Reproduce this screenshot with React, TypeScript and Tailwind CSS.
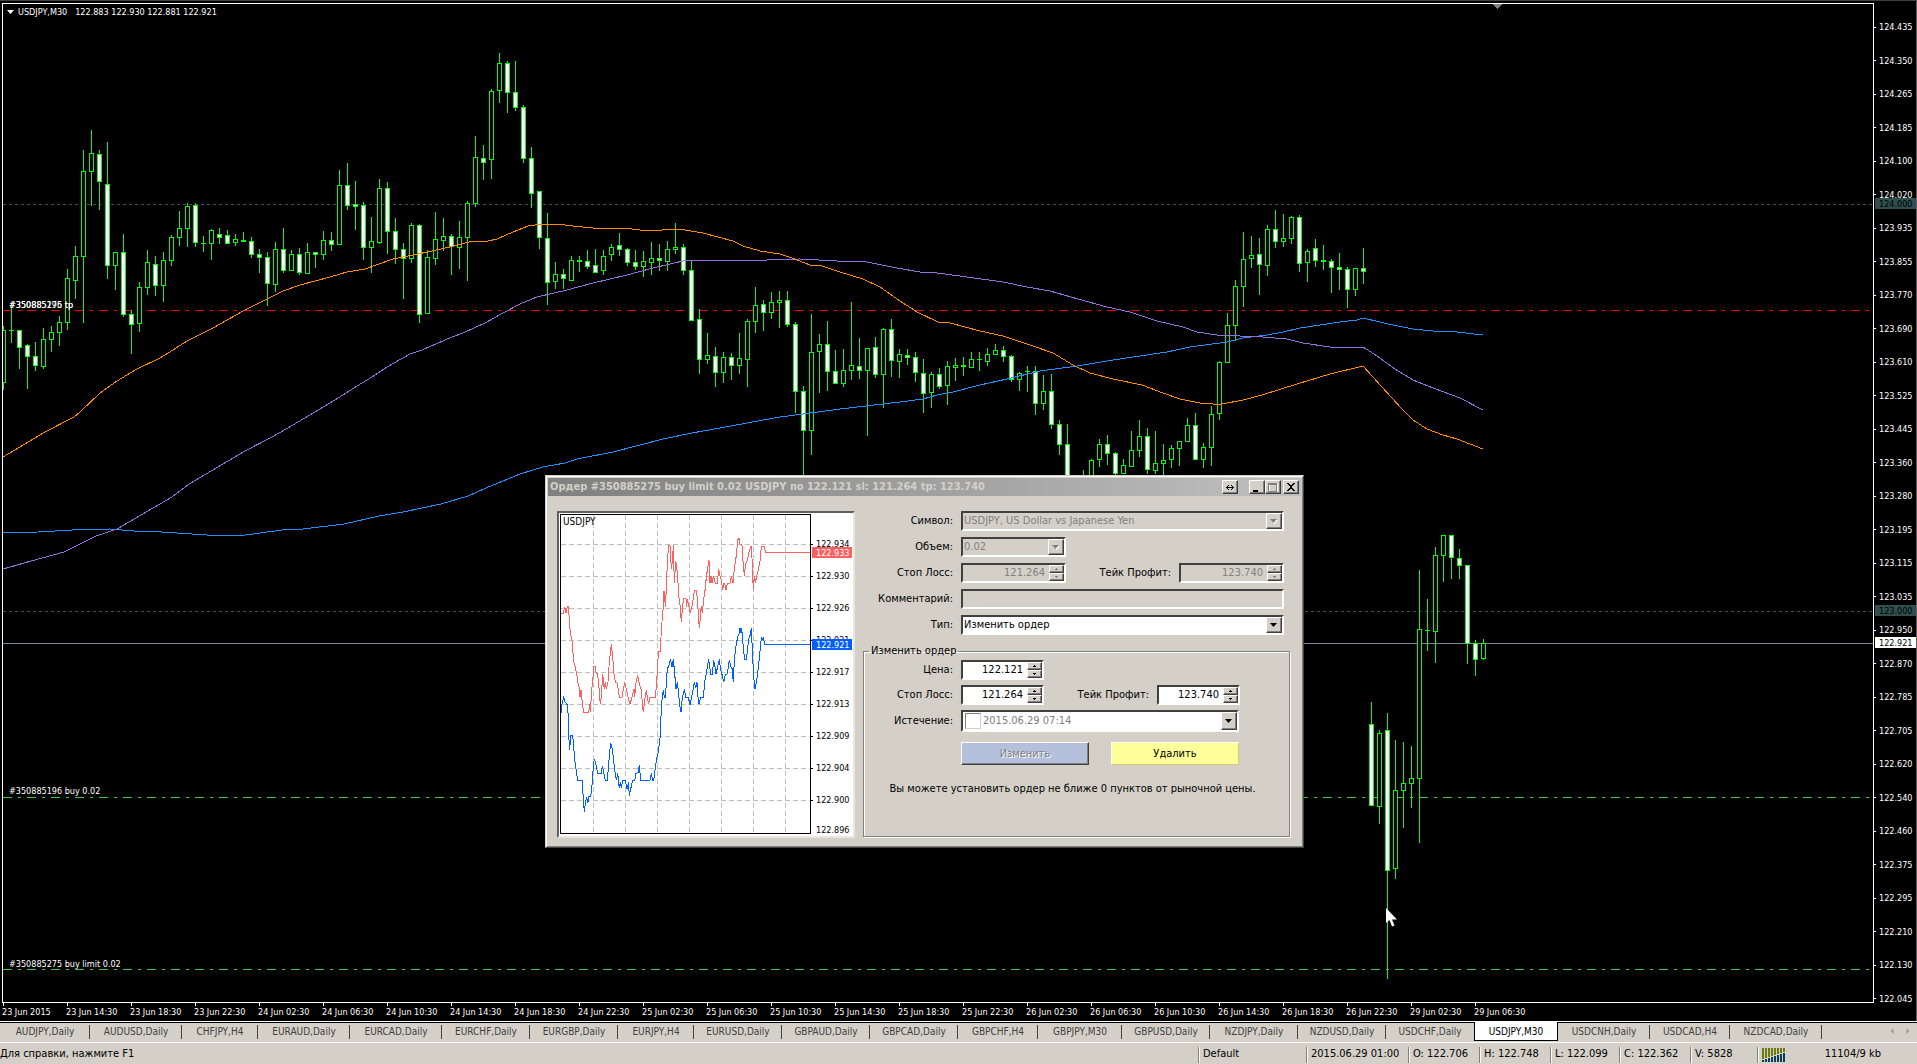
import type { ReactNode } from "react";

type Candle = [high: number, top: number, bottom: number, low: number, bearish: 0 | 1];

const CANDLES: Candle[] = [
  [326, 330, 382, 389, 0], [307, 330, 330, 342, 0], [330, 330, 347, 368, 1], [344, 345, 356, 388, 1],
  [342, 356, 365, 370, 1], [328, 339, 366, 368, 0], [326, 332, 339, 351, 0], [316, 322, 332, 345, 0],
  [269, 278, 322, 329, 0], [246, 256, 280, 298, 0], [150, 171, 256, 322, 0], [130, 153, 171, 205, 0],
  [150, 154, 181, 209, 1], [142, 184, 265, 278, 1], [252, 252, 265, 289, 0], [234, 252, 314, 316, 1],
  [310, 314, 324, 353, 1], [282, 287, 323, 331, 0], [250, 262, 287, 294, 0], [256, 264, 285, 295, 1],
  [252, 260, 285, 301, 0], [235, 237, 260, 265, 0], [211, 228, 237, 245, 0], [203, 206, 228, 246, 0],
  [203, 205, 242, 246, 1], [236, 243, 243, 251, 0], [229, 230, 243, 259, 0], [228, 234, 237, 243, 1],
  [230, 235, 243, 243, 1], [234, 239, 242, 245, 0], [232, 240, 241, 241, 0], [237, 241, 254, 257, 1],
  [249, 254, 257, 272, 1], [252, 257, 283, 305, 1], [242, 249, 284, 291, 0], [228, 249, 270, 272, 1],
  [250, 254, 270, 270, 0], [248, 254, 272, 274, 1], [243, 252, 273, 273, 0], [252, 252, 254, 267, 1],
  [231, 240, 254, 259, 0], [232, 240, 244, 250, 1], [170, 185, 244, 244, 0], [163, 185, 205, 209, 1],
  [181, 204, 206, 229, 1], [202, 205, 247, 259, 1], [217, 241, 247, 272, 0], [179, 188, 242, 243, 0],
  [182, 188, 231, 253, 1], [218, 231, 249, 263, 1], [243, 249, 258, 298, 1], [223, 225, 258, 262, 0],
  [224, 225, 314, 322, 1], [250, 257, 313, 313, 0], [212, 239, 258, 264, 0], [218, 236, 240, 250, 0],
  [234, 236, 246, 274, 1], [221, 237, 247, 268, 0], [201, 203, 237, 280, 0], [136, 157, 203, 206, 0],
  [145, 158, 162, 179, 1], [89, 91, 159, 178, 0], [53, 63, 90, 102, 0], [61, 63, 92, 112, 1],
  [61, 92, 107, 110, 1], [105, 107, 158, 162, 1], [147, 158, 193, 207, 1], [191, 191, 237, 248, 1],
  [213, 238, 282, 304, 1], [262, 274, 281, 288, 0], [269, 274, 278, 288, 1], [256, 260, 280, 280, 0],
  [256, 260, 261, 271, 0], [250, 261, 266, 268, 1], [249, 265, 272, 272, 1], [250, 256, 270, 274, 0],
  [244, 247, 254, 260, 0], [233, 245, 249, 255, 1], [248, 249, 262, 265, 1], [250, 262, 266, 269, 1],
  [251, 261, 266, 276, 0], [242, 258, 262, 274, 0], [244, 258, 260, 270, 1], [241, 249, 261, 270, 0],
  [223, 247, 249, 253, 0], [244, 247, 270, 274, 1], [261, 270, 320, 320, 1], [309, 319, 359, 373, 1],
  [333, 355, 359, 363, 0], [347, 356, 372, 386, 1], [352, 357, 372, 382, 0], [353, 357, 365, 379, 1],
  [333, 358, 365, 373, 0], [319, 321, 359, 386, 0], [287, 305, 321, 332, 0], [300, 304, 312, 330, 1],
  [292, 302, 312, 318, 0], [291, 300, 302, 327, 0], [291, 300, 324, 326, 1], [322, 324, 391, 412, 1],
  [386, 391, 430, 480, 1], [314, 352, 430, 454, 0], [334, 344, 351, 392, 0], [321, 344, 371, 390, 1],
  [350, 371, 383, 383, 1], [349, 370, 383, 386, 0], [302, 365, 370, 379, 0], [338, 366, 370, 378, 1],
  [348, 348, 370, 435, 0], [337, 347, 374, 377, 1], [328, 329, 374, 407, 0], [319, 329, 360, 376, 1],
  [349, 354, 361, 377, 0], [349, 355, 357, 364, 1], [352, 357, 372, 381, 1], [359, 373, 393, 412, 1],
  [372, 374, 392, 407, 0], [368, 374, 386, 388, 1], [361, 366, 385, 404, 0], [358, 365, 367, 380, 0],
  [357, 365, 366, 375, 1], [352, 359, 367, 367, 0], [352, 359, 359, 370, 0], [348, 354, 361, 365, 0],
  [344, 350, 354, 354, 0], [346, 350, 356, 361, 1], [355, 356, 379, 381, 1], [372, 373, 379, 390, 0],
  [366, 371, 371, 391, 0], [366, 371, 403, 414, 1], [375, 391, 403, 409, 0], [374, 391, 424, 428, 1],
  [420, 424, 444, 454, 1], [424, 444, 480, 484, 1], [478, 482, 490, 496, 1], [470, 479, 488, 492, 0],
  [459, 460, 480, 484, 0], [439, 444, 459, 466, 0], [435, 444, 453, 464, 1], [452, 453, 473, 475, 1],
  [459, 465, 473, 473, 0], [431, 450, 466, 466, 0], [420, 436, 450, 456, 0], [428, 436, 469, 473, 1],
  [431, 463, 470, 473, 0], [444, 460, 463, 480, 0], [445, 448, 459, 467, 0], [441, 441, 448, 465, 0],
  [418, 425, 441, 441, 0], [413, 425, 459, 459, 1], [443, 447, 459, 467, 0], [406, 414, 447, 465, 0],
  [361, 362, 413, 419, 0], [313, 325, 362, 362, 0], [280, 286, 325, 340, 0], [232, 259, 286, 306, 0],
  [236, 255, 258, 267, 0], [238, 254, 264, 294, 1], [225, 229, 265, 275, 0], [210, 229, 241, 247, 1],
  [214, 238, 241, 246, 0], [216, 217, 238, 243, 0], [215, 217, 263, 271, 1], [249, 251, 262, 281, 0],
  [239, 248, 260, 266, 1], [245, 260, 261, 269, 0], [259, 261, 267, 292, 1], [253, 267, 269, 289, 1],
  [267, 269, 289, 307, 1], [268, 268, 289, 295, 0], [248, 268, 271, 283, 1],
  [702, 724, 805, 805, 1], [730, 733, 806, 823, 0], [713, 730, 870, 978, 1], [740, 790, 868, 878, 0],
  [742, 783, 790, 827, 0], [746, 778, 783, 807, 0], [570, 629, 778, 842, 0], [599, 630, 630, 650, 0],
  [547, 555, 631, 662, 0], [535, 535, 555, 581, 0], [535, 535, 557, 578, 1], [549, 558, 565, 578, 1],
  [565, 565, 643, 663, 1], [640, 643, 659, 675, 1], [639, 643, 658, 659, 0],
];

const ORANGE =
  "3,457 45,432 74,417 80,412 100,393 117,381 137,369 160,358 173,350 187,341 213,328 243,311 267,299 283,291 300,285 330,277 347,272 365,269 393,259 418,254 450,247 473,241 488,241 497,239 513,232 528,226 535,225 557,224 573,226 593,228 623,228 640,230 662,230 668,229 685,230 703,233 733,241 743,246 760,251 780,254 792,258 810,265 822,266 840,272 863,279 880,287 900,301 917,312 938,322 950,323 980,331 1003,336 1033,346 1053,353 1073,365 1090,373 1113,379 1142,385 1163,393 1180,399 1200,403 1213,404 1222,404 1243,400 1262,395 1297,384 1330,374 1363,366 1382,387 1402,409 1413,420 1427,429 1443,435 1457,439 1483,449";
const PURPLE =
  "3,569 31,561 64,552 96,536 117,529 141,515 172,497 189,484 245,451 272,437 293,425 335,400 357,386 372,377 387,367 410,354 422,350 452,337 463,333 485,323 503,313 520,304 537,297 567,290 593,283 627,275 653,268 687,260 735,260 767,260 800,259 837,261 867,262 897,268 920,272 930,272 967,277 1003,282 1027,287 1050,291 1078,299 1107,307 1130,312 1157,321 1183,327 1197,332 1217,335 1263,337 1287,339 1303,343 1330,347 1363,347 1377,356 1395,369 1413,380 1433,388 1460,398 1483,410";
const BLUE =
  "3,533 38,532 72,530 110,529 134,531 162,532 207,535 238,536 282,530 303,529 344,524 379,516 403,512 441,504 468,496 486,488 520,474 543,467 565,463 577,459 613,452 640,445 663,439 692,433 720,428 747,423 780,417 803,414 840,409 883,404 900,402 923,399 937,395 953,392 980,385 1007,379 1040,371 1077,366 1113,360 1140,356 1167,352 1190,347 1227,342 1243,338 1267,335 1283,332 1300,328 1320,325 1340,322 1357,320 1363,318 1380,322 1388,324 1413,329 1433,331 1457,332 1483,335";

const ASK =
  "62,430 70,430 74,410 78,430 82,410 86,410 88,458 91,488 96,512 101,575 106,592 110,612 114,640 118,655 120,680 123,660 127,700 131,727 146,727 149,703 151,727 155,658 158,640 161,590 166,590 168,605 173,614 177,655 181,703 184,680 188,613 193,658 196,637 199,658 204,635 208,575 214,523 218,560 222,613 226,637 232,640 238,682 246,682 250,658 254,637 260,662 264,682 270,703 276,680 282,658 284,680 288,640 293,615 298,640 304,660 307,700 310,727 314,690 319,660 322,682 326,703 329,682 346,682 350,640 353,580 356,545 361,545 363,500 367,440 370,410 372,362 374,380 376,410 379,360 382,275 386,226 390,226 392,270 395,296 398,260 400,226 403,340 407,272 410,290 413,320 416,375 420,405 424,455 428,405 431,386 438,386 440,410 442,388 447,410 451,430 456,408 460,385 463,362 469,362 472,385 475,430 478,475 482,430 484,408 487,430 491,388 495,362 497,340 502,300 507,271 510,340 513,318 516,340 520,318 526,340 532,340 536,296 540,318 544,330 548,360 551,340 554,340 558,360 562,340 570,340 574,318 579,340 583,295 587,272 590,245 593,210 597,203 600,222 606,226 609,272 613,317 617,280 622,272 626,250 633,228 636,265 638,318 640,360 643,317 646,340 650,318 655,300 660,272 664,228 672,228 677,246 811,246";
const BID =
  "64,728 66,703 71,682 75,695 80,703 83,705 85,750 88,840 91,820 93,796 98,796 101,830 104,870 110,910 113,931 127,931 130,990 133,1025 136,1000 140,980 143,1000 147,979 152,979 155,960 158,920 160,890 163,866 168,885 173,910 184,910 187,887 191,908 196,931 202,931 206,880 212,818 216,835 220,862 224,900 229,931 233,910 238,955 241,935 244,955 248,931 256,931 260,955 263,955 265,935 268,978 272,957 278,931 284,931 288,910 294,908 298,886 302,931 330,931 334,910 338,931 341,931 345,900 350,865 355,845 360,805 363,740 366,690 370,660 373,682 376,682 379,640 382,595 386,590 391,568 396,590 400,568 404,610 408,658 412,637 415,660 419,705 423,727 427,682 433,658 437,682 445,682 450,705 455,680 459,660 463,637 467,655 471,637 474,680 477,703 482,682 490,682 494,637 498,614 502,590 506,568 512,612 517,612 521,570 525,590 528,612 533,590 538,568 542,600 548,620 551,637 556,614 562,612 568,570 572,590 576,595 580,637 583,570 589,520 595,495 598,490 600,475 603,488 605,475 608,510 611,545 614,568 619,568 622,545 626,505 630,497 634,475 637,540 641,620 645,658 649,637 653,610 658,565 662,520 665,500 667,510 670,500 674,523 811,523";

const PRICES = [
  "124.435", "124.350", "124.265", "124.185", "124.100", "124.020", "123.935", "123.855", "123.770", "123.690",
  "123.610", "123.525", "123.445", "123.360", "123.280", "123.195", "123.115", "123.035", "122.950", "122.870",
  "122.785", "122.705", "122.620", "122.540", "122.460", "122.375", "122.295", "122.210", "122.130", "122.045",
];

const TIMES = [
  "23 Jun 2015", "23 Jun 14:30", "23 Jun 18:30", "23 Jun 22:30", "24 Jun 02:30", "24 Jun 06:30", "24 Jun 10:30",
  "24 Jun 14:30", "24 Jun 18:30", "24 Jun 22:30", "25 Jun 02:30", "25 Jun 06:30", "25 Jun 10:30", "25 Jun 14:30",
  "25 Jun 18:30", "25 Jun 22:30", "26 Jun 02:30", "26 Jun 06:30", "26 Jun 10:30", "26 Jun 14:30", "26 Jun 18:30",
  "26 Jun 22:30", "29 Jun 02:30", "29 Jun 06:30",
];

const TABS: [string, string][] = [
  ["AUDJPY,Daily", "w-[90px]"], ["AUDUSD,Daily", "w-[92px]"], ["CHFJPY,H4", "w-[76px]"], ["EURAUD,Daily", "w-[92px]"],
  ["EURCAD,Daily", "w-[92px]"], ["EURCHF,Daily", "w-[88px]"], ["EURGBP,Daily", "w-[88px]"], ["EURJPY,H4", "w-[76px]"],
  ["EURUSD,Daily", "w-[88px]"], ["GBPAUD,Daily", "w-[88px]"], ["GBPCAD,Daily", "w-[88px]"], ["GBPCHF,H4", "w-[80px]"],
  ["GBPJPY,M30", "w-[84px]"], ["GBPUSD,Daily", "w-[88px]"], ["NZDJPY,Daily", "w-[88px]"], ["NZDUSD,Daily", "w-[88px]"],
  ["USDCHF,Daily", "w-[88px]"], ["USDJPY,M30", "w-[84px]"], ["USDCNH,Daily", "w-[92px]"], ["USDCAD,H4", "w-[80px]"],
  ["NZDCAD,Daily", "w-[92px]"],
];

const sunken =
  "border-2 border-t-[#404040] border-l-[#404040] border-r-white border-b-white";
const raised =
  "border border-t-white border-l-white border-r-[#404040] border-b-[#404040] bg-[#d4d0c8] shadow-[inset_-1px_-1px_0_#808080]";

function HLine({ y, color, dash }: { y: number; color: string; dash?: string }) {
  return <line x1="3" x2="4000" y1={y + 0.5} y2={y + 0.5} stroke={color} strokeDasharray={dash} />;
}

function CandleChart() {
  return (
    <svg className="absolute inset-0 h-full w-full" shapeRendering="crispEdges" aria-label="USDJPY M30">
      <g transform="translate(-3 -4)" fill="none">
        <HLine y={204} color="#3c5050" dash="3 3" />
        <HLine y={611} color="#3c5050" dash="3 3" />
        <HLine y={643} color="#778899" />
        <HLine y={310} color="#ff0000" dash="9 6 3 6" />
        <HLine y={797} color="#32cd32" dash="9 6 3 6" />
        <HLine y={969} color="#32cd32" dash="9 6 3 6" />
        {CANDLES.map(([high, top, bottom, low, bearish], i) => {
          const x = 3 + i * 8;
          return (
            <g key={x} stroke="#00ff00">
              <line x1={x + 0.5} x2={x + 0.5} y1={high} y2={low + 1} />
              {top === bottom ? (
                <line x1={x - 2} x2={x + 3} y1={top + 0.5} y2={top + 0.5} />
              ) : (
                <rect x={x - 1.5} y={top + 0.5} width="4" height={bottom - top} fill={bearish ? "#fff" : "#000"} />
              )}
            </g>
          );
        })}
        <polyline points={BLUE} stroke="#1e90ff" />
        <polyline points={PURPLE} stroke="#9370db" />
        <polyline points={ORANGE} stroke="#ff8c00" />
        <path d="M1492 4h10l-5 5z" fill="#808080" />
      </g>
    </svg>
  );
}

function ChartLabel({ className, children }: { className: string; children: ReactNode }) {
  return <span className={`absolute leading-3 whitespace-nowrap text-white ${className}`}>{children}</span>;
}

function PriceAxis() {
  return (
    <div className="relative flex w-[43px] shrink-0 flex-col justify-between border-r border-[#606060] pt-5 pb-4">
      {PRICES.map((p) => (
        <div key={p} className="flex items-center gap-[3px] leading-3 text-white">
          <span className="h-px w-0.5 bg-white" />
          {p}
        </div>
      ))}
      <span className="absolute top-[197px] right-0 left-px h-[11px] bg-[#2f4f4f] pl-1 leading-3 text-black">124.000</span>
      <span className="absolute top-[604px] right-0 left-px h-[11px] bg-[#2f4f4f] pl-1 leading-3 text-black">123.000</span>
      <span className="absolute top-[636px] right-0 left-px h-[11px] bg-white pl-1 leading-3 text-black">122.921</span>
    </div>
  );
}

function DownArrow({ disabled = false }: { disabled?: boolean }) {
  return (
    <span className={`pointer-events-none absolute top-0 right-0 bottom-0 flex w-4 items-center justify-center ${raised}`}>
      <svg width="8" height="5" viewBox="0 0 8 5" aria-hidden="true">
        {disabled && <path d="M1 1h7L4.500 5z" fill="#fff" />}
        <path d="M0 0h7L3.500 4z" fill={disabled ? "#808080" : "#000"} />
      </svg>
    </span>
  );
}

function Select({ id, value, className, disabled }: { id: string; value: string; className: string; disabled?: boolean }) {
  return (
    <div className={`relative h-5 ${sunken} ${disabled ? "bg-[#d4d0c8]" : "bg-white"} ${className}`}>
      <select
        id={id}
        disabled={disabled}
        className="block h-4 w-full appearance-none truncate bg-transparent pl-px leading-4 text-black opacity-100 disabled:text-[#808080]"
      >
        <option>{value}</option>
      </select>
      <DownArrow disabled={disabled} />
    </div>
  );
}

function Spinner({ id, value, className, disabled }: { id: string; value: string; className: string; disabled?: boolean }) {
  const fill = disabled ? "#808080" : "#000";
  return (
    <div className={`flex ${sunken} ${disabled ? "bg-[#d4d0c8]" : "bg-white"} ${className}`}>
      <input
        id={id}
        defaultValue={value}
        disabled={disabled}
        className="w-0 min-w-0 flex-1 bg-transparent pr-1 text-right text-black disabled:text-[#808080]"
      />
      <div className="flex w-[15px] flex-col">
        <button type="button" disabled={disabled} aria-label="Увеличить" className={`flex flex-1 items-center justify-center ${raised}`}>
          <svg width="3" height="2" viewBox="0 0 3 2" shapeRendering="crispEdges"><path d="M1 0h1v1h1v1H0V1h1z" fill={fill} /></svg>
        </button>
        <button type="button" disabled={disabled} aria-label="Уменьшить" className={`flex flex-1 items-center justify-center ${raised}`}>
          <svg width="3" height="2" viewBox="0 0 3 2" shapeRendering="crispEdges"><path d="M0 0h3v1H2v1H1V1H0z" fill={fill} /></svg>
        </button>
      </div>
    </div>
  );
}

function Label({ htmlFor, className = "w-[90px]", children }: { htmlFor: string; className?: string; children: ReactNode }) {
  return (
    <label htmlFor={htmlFor} className={`mr-2 shrink-0 text-right whitespace-nowrap ${className}`}>
      {children}
    </label>
  );
}

function TickChart() {
  return (
    <div className="flex h-[327px] w-[298px] shrink-0 border-2 border-t-[#606060] border-r-[#e8e6e0] border-b-[#e8e6e0] border-l-[#606060] bg-white pt-px pl-px text-[9px]">
      <div className="relative h-80 w-[251px] border border-black">
        <svg className="absolute inset-0 h-full w-full" viewBox="63 135 747 954" preserveAspectRatio="none" fill="none" shapeRendering="crispEdges">
          {[160, 256, 352, 448, 544, 640, 736].map((x) => (
            <line key={x} x1={x} x2={x} y1="135" y2="1089" stroke="#c0c0c0" strokeWidth="3" strokeDasharray="15 9" />
          ))}
          {[223, 319, 415, 511, 607, 703, 799, 895, 991].map((y) => (
            <line key={y} x1="63" x2="810" y1={y} y2={y} stroke="#c0c0c0" strokeWidth="3" strokeDasharray="15 9" />
          ))}
          <polyline points={ASK} stroke="#ff5f5f" strokeWidth="3" />
          <polyline points={BID} stroke="#0060ff" strokeWidth="3" />
        </svg>
        <span className="absolute top-px left-0.5 text-[10px] leading-3 text-black">USDJPY</span>
      </div>
      <div className="relative flex-1 pt-6 text-black">
        {["122.934", "122.930", "122.926", "122.921", "122.917", "122.913", "122.909", "122.904", "122.900"].map((p) => (
          <div key={p} className="flex h-8 items-start gap-[3px] leading-3">
            <span className="mt-1.5 h-px w-0.5 bg-black" />
            {p}
          </div>
        ))}
        <div className="-mt-0.5 pl-[5px] leading-3">122.896</div>
        <span className="absolute top-[33px] right-px left-px h-[11px] bg-[#ff5f5f] pl-1 leading-3 text-white">122.933</span>
        <span className="absolute top-[125px] right-px left-px h-[11px] bg-[#0060ff] pl-1 leading-3 text-white">122.921</span>
      </div>
    </div>
  );
}

function TitleButton({ label, className = "", children }: { label: string; className?: string; children: ReactNode }) {
  return (
    <button type="button" aria-label={label} className={`flex h-3.5 w-4 items-center justify-center ${raised} ${className}`}>
      <svg width="10" height="9" viewBox="0 0 10 9" fill="none" shapeRendering="crispEdges">{children}</svg>
    </button>
  );
}

function OrderDialog() {
  return (
    <section
      role="dialog"
      aria-label="Ордер"
      className="absolute top-[475px] left-[545px] w-[759px] border border-t-[#d4d0c8] border-r-[#404040] border-b-[#404040] border-l-[#d4d0c8] bg-[#d4d0c8] p-0.5 text-[11px] leading-[14px] text-black shadow-[inset_1px_1px_0_#fff,inset_-1px_-1px_0_#808080]"
    >
      <header className="flex h-[18px] items-center bg-linear-to-r from-[#808080] to-[#c0c0c0] pr-0.5 pl-0.5">
        <h1 className="flex-1 font-bold whitespace-nowrap text-[#d4d0c8]">
          Ордер #350885275 buy limit 0.02 USDJPY по 122.121 sl: 121.264 tp: 123.740
        </h1>
        <TitleButton label="Развернуть график" className="mr-[11px]">
          <path d="M1 4.500h8M3 2.500h1M2 3.500h1M2 5.500h1M3 6.500h1M6 2.500h1M7 3.500h1M7 5.500h1M6 6.500h1" stroke="#000" />
        </TitleButton>
        <TitleButton label="Свернуть"><path d="M1 7h5v2H1z" fill="#000" /></TitleButton>
        <TitleButton label="Развернуть" className="mr-0.5">
          <path d="M1.500 1h8v7.500h-8z" stroke="#fff" />
          <path d="M.5.5h8V8h-8zM.5 1.500h8" stroke="#808080" />
        </TitleButton>
        <TitleButton label="Закрыть">
          <path d="M1 0h2v1h1v1h2V1h1V0h2v1H8v1H7v1H6v2h1v1h1v1h1v1H7V7H6V6H4v1H3v1H1V7h1V6h1V5h1V3H3V2H2V1H1z" fill="#000" />
        </TitleButton>
      </header>

      <div className="flex gap-2 pt-[15px] pr-[11px] pb-[7px] pl-[9px]">
        <TickChart />
        <form className="flex-1" onSubmit={(e) => e.preventDefault()}>
          <div className="flex flex-col gap-1.5 pr-1.5">
            <div className="flex items-center">
              <Label htmlFor="symbol">Символ:</Label>
              <Select id="symbol" value="USDJPY, US Dollar vs Japanese Yen" className="flex-1" disabled />
            </div>
            <div className="flex items-center">
              <Label htmlFor="volume">Объем:</Label>
              <Select id="volume" value="0.02" className="w-[105px]" disabled />
            </div>
            <div className="flex items-center">
              <Label htmlFor="sl">Стоп Лосс:</Label>
              <Spinner id="sl" value="121.264" className="h-5 w-[105px]" disabled />
              <Label htmlFor="tp" className="ml-auto">Тейк Профит:</Label>
              <Spinner id="tp" value="123.740" className="h-5 w-[105px]" disabled />
            </div>
            <div className="flex items-center">
              <Label htmlFor="comment">Комментарий:</Label>
              <input id="comment" disabled className={`h-5 w-0 flex-1 bg-[#d4d0c8] ${sunken}`} />
            </div>
            <div className="flex items-center">
              <Label htmlFor="type">Тип:</Label>
              <Select id="type" value="Изменить ордер" className="flex-1" />
            </div>
          </div>

          <fieldset className="mt-[9px] h-[193px] border border-[#808080] pl-[7px] shadow-[1px_1px_0_#fff,inset_1px_1px_0_#fff]">
            <legend className="-ml-0.5 px-0.5 leading-[14px]">Изменить ордер</legend>
            <div className="mt-0.5 flex flex-col gap-[5px]">
              <div className="flex items-center">
                <Label htmlFor="price" className="w-[82px]">Цена:</Label>
                <Spinner id="price" value="122.121" className="h-5 w-[83px]" />
              </div>
              <div className="flex items-center">
                <Label htmlFor="new-sl" className="w-[82px]">Стоп Лосс:</Label>
                <Spinner id="new-sl" value="121.264" className="h-5 w-[83px]" />
                <Label htmlFor="new-tp" className="w-[105px]">Тейк Профит:</Label>
                <Spinner id="new-tp" value="123.740" className="h-5 w-[83px]" />
              </div>
              <div className="flex items-center">
                <Label htmlFor="expiry" className="w-[82px]">Истечение:</Label>
                <div className={`relative flex h-[22px] w-[278px] items-center gap-0.5 bg-white pl-0.5 ${sunken}`}>
                  <input
                    type="checkbox"
                    aria-label="Истечение"
                    className="h-4 w-4 appearance-none border border-t-[#808080] border-r-[#d4d0c8] border-b-[#d4d0c8] border-l-[#808080] bg-white"
                  />
                  <input id="expiry" disabled defaultValue="2015.06.29 07:14" className="w-0 flex-1 bg-transparent text-[#808080]" />
                  <DownArrow />
                </div>
              </div>
            </div>
            <div className="mt-2.5 ml-[90px] flex gap-[22px]">
              <button
                type="button"
                disabled
                className="h-[23px] w-32 border border-t-white border-r-[#404040] border-b-[#404040] border-l-white bg-[#b4c0dc] text-[#808080] shadow-[inset_-1px_-1px_0_#808080] text-shadow-[1px_1px_0_#fff]"
              >
                Изменить
              </button>
              <button type="button" className="h-[23px] w-32 border border-t-white border-r-[#d0cc70] border-b-[#d0cc70] border-l-white bg-[#ffff99]">
                Удалить
              </button>
            </div>
            <p className="mt-[17px] pr-[15px] text-center whitespace-nowrap">
              Вы можете установить ордер не ближе 0 пунктов от рыночной цены.
            </p>
          </fieldset>
        </form>
      </div>
    </section>
  );
}

function SymbolTabs() {
  return (
    <nav className="flex h-5 items-start border-t border-black bg-[#d4d0c8] text-[10px] leading-4 text-[#404040]">
      {TABS.map(([name, width]) => {
        const active = name === "USDJPY,M30";
        const beforeActive = name === "USDCHF,Daily";
        return (
          <a
            key={name}
            href="#"
            className={`relative -mt-px h-[19px] pt-0.5 text-center whitespace-nowrap ${width} ${
              active ? "border-x border-b border-black bg-white text-black" : ""
            }`}
          >
            {name}
            {!active && !beforeActive && <span className="absolute top-[3px] right-0 h-3.5 w-px bg-[#404040]" />}
          </a>
        );
      })}
      <div className="mt-1 mr-1.5 ml-auto flex gap-2.5">
        <button type="button" aria-label="Назад"><svg width="6" height="8" viewBox="0 0 6 8"><path d="M4.500 1v6L1.500 4z" fill="#a09c94" /></svg></button>
        <button type="button" aria-label="Вперед"><svg width="6" height="8" viewBox="0 0 6 8"><path d="M1.500 1v6l3-3z" fill="#a09c94" /></svg></button>
      </div>
    </nav>
  );
}

function StatusCell({ width, children }: { width: string; children: ReactNode }) {
  return (
    <div className={`flex h-4 items-center border-l border-[#808080] pl-1 whitespace-nowrap shadow-[inset_1px_0_0_#fff] ${width}`}>
      {children}
    </div>
  );
}

function StatusBar() {
  return (
    <footer className="flex h-[22px] items-center border-t border-white bg-[#d4d0c8] pt-0.5 text-[11px] text-black">
      <span className="flex-1">Для справки, нажмите F1</span>
      <StatusCell width="w-[108px]">Default</StatusCell>
      <StatusCell width="w-[102px]">2015.06.29 01:00</StatusCell>
      <StatusCell width="w-[71px]">O: 122.706</StatusCell>
      <StatusCell width="w-[71px]">H: 122.748</StatusCell>
      <StatusCell width="w-[69px]">L: 122.099</StatusCell>
      <StatusCell width="w-[71px]">C: 122.362</StatusCell>
      <StatusCell width="w-[67px]">V: 5828</StatusCell>
      <StatusCell width="w-[160px]">
        <svg width="24" height="14" viewBox="0 0 24 14" shapeRendering="crispEdges" aria-label="Соединение">
          {[0, 1, 2, 3, 4, 5, 6, 7].map((i) => (
            <g key={i}>
              <rect x={i * 3} y="0" width="2" height={11 - i} fill="#6b7a0c" />
              <rect x={i * 3} y={12 - i} width="2" height={2 + i} fill="#0c3c5c" />
            </g>
          ))}
        </svg>
        <span className="mr-9 ml-auto">11104/9 kb</span>
      </StatusCell>
    </footer>
  );
}

export default function App() {
  return (
    <main className="relative flex min-h-screen flex-col overflow-hidden bg-black font-['DejaVu_Sans_Condensed','Noto_Sans',sans-serif]">
      <div className="flex flex-1 border-t border-[#404040] text-[9px]">
        <div className="flex min-w-0 flex-1 flex-col pt-0.5 pl-0.5">
          <div className="relative flex-1 overflow-hidden border border-white">
            <CandleChart />
            <svg className="absolute top-1.5 left-1" width="7" height="4" viewBox="0 0 7 4"><path d="M0 0h7L3.500 4z" fill="#fff" /></svg>
            <ChartLabel className="top-0.5 left-[15px] flex gap-2">
              <span>USDJPY,M30</span>
              <span>122.883 122.930 122.881 122.921</span>
            </ChartLabel>
            <ChartLabel className="top-[295px] left-1.5">#350885275 tp</ChartLabel>
            <ChartLabel className="top-[295px] left-1.5">#350885196 tp</ChartLabel>
            <ChartLabel className="top-[781px] left-1.5">#350885196 buy 0.02</ChartLabel>
            <ChartLabel className="top-[954px] left-1.5">#350885275 buy limit 0.02</ChartLabel>
          </div>
          <div className="flex h-[18px] overflow-hidden text-white">
            {TIMES.map((t) => (
              <div key={t} className="w-16 shrink-0 whitespace-nowrap">
                <span className="ml-px block h-[3px] w-px bg-white" />
                <span className="block leading-3">{t}</span>
              </div>
            ))}
          </div>
        </div>
        <PriceAxis />
      </div>
      <div className="h-px bg-white" />
      <SymbolTabs />
      <StatusBar />
      <OrderDialog />
      <svg className="absolute top-[908px] left-[1386px]" width="12" height="20" viewBox="0 0 12 20" aria-hidden="true">
        <path d="M0 0v15l3.500-3L6 18.500l2.500-1L6 11.500h5z" fill="#fff" />
      </svg>
    </main>
  );
}
